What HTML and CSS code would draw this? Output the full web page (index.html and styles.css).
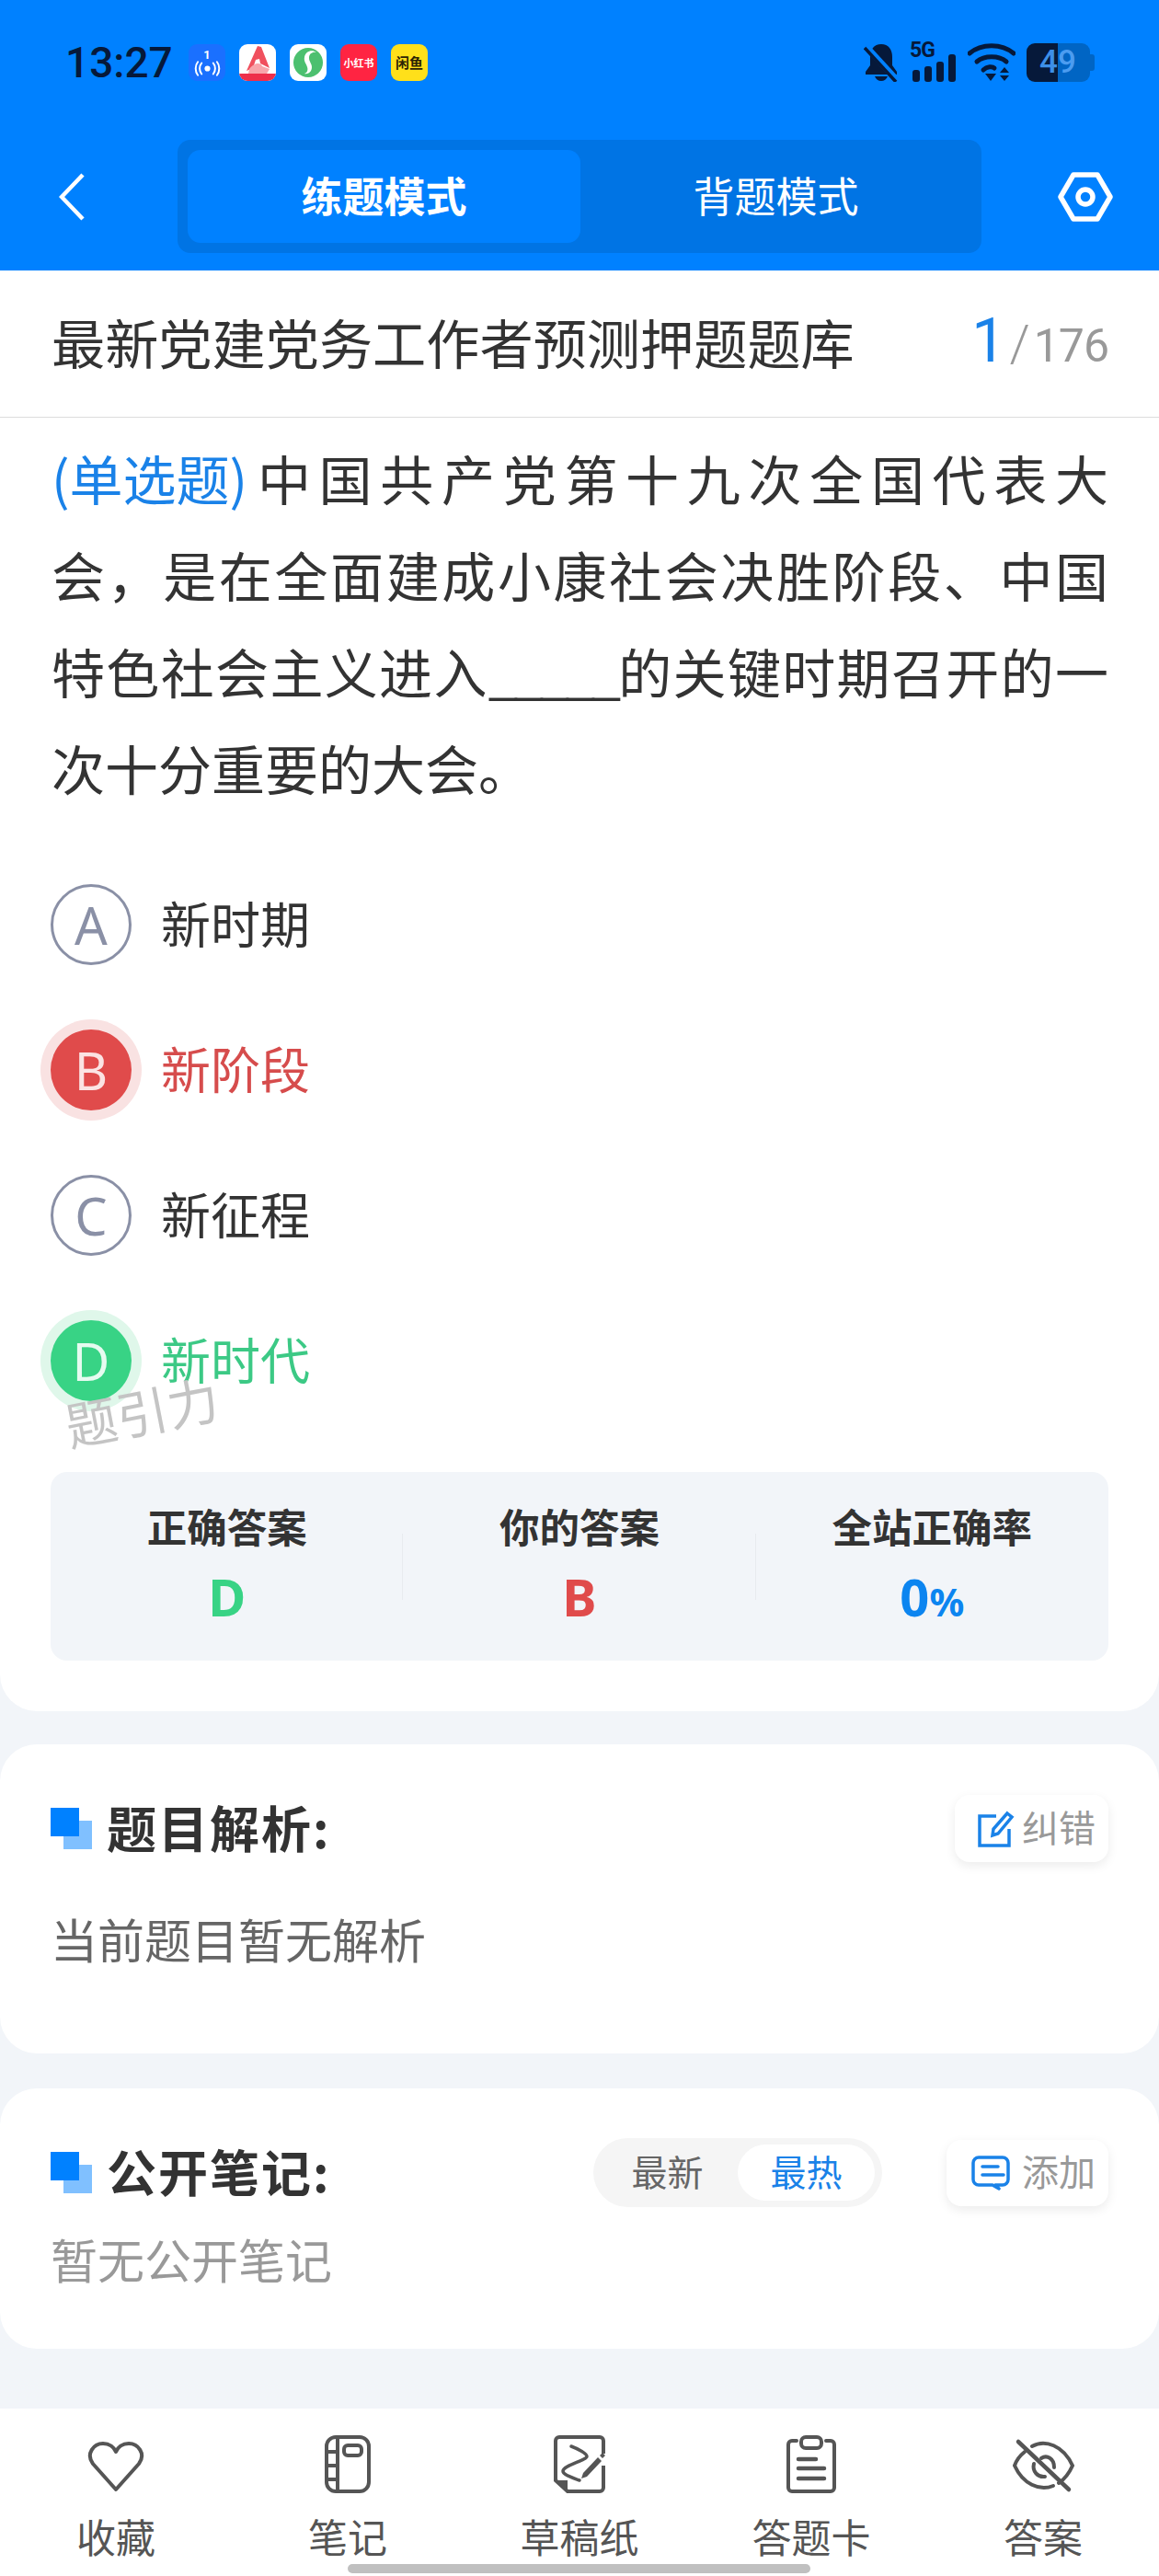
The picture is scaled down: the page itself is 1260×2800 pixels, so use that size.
FILE: index.html
```html
<!DOCTYPE html>
<html lang="zh-CN">
<head>
<meta charset="utf-8">
<title>练题模式</title>
<link rel="stylesheet" href="styles.css">
</head>
<body>
<div class="page">

  <!-- header: status bar + mode tabs -->
  <header class="header">
    <div class="status">
      <span class="time">13:27</span>
      <div class="apps">
        <span class="app app-hot">
          <span class="hot-num">1</span>
          <svg class="hot-wave" viewBox="0 0 32 18"><circle cx="16" cy="9" r="3.4" fill="#fff"/><path d="M9 2.5C6 6 6 12 9 15.5M23 2.5C26 6 26 12 23 15.5M4.5 1C1 5.500 1 12.500 4.500 17M27.500 1C31 5.500 31 12.500 27.500 17" fill="none" stroke="#fff" stroke-width="2.200" stroke-linecap="round"/></svg>
        </span>
        <span class="app app-white">
          <svg class="app-svg" viewBox="0 0 40 40"><path d="M20 2L8 29l7-3 3-9 4-1 1 5 10 5L24 3z" fill="#f0505e"/><path d="M11 27c6-8 13-7 14-3l8 3-3 5H10z" fill="#f8a5ab"/><path d="M0 32h40v2a6 6 0 0 1-6 6H6a6 6 0 0 1-6-6z" fill="#ee2f4b"/></svg>
        </span>
        <span class="app app-white">
          <svg class="app-svg" viewBox="0 0 40 40"><circle cx="20" cy="20" r="16" fill="#4cc06f"/><path d="M29 9c-4-1-8 1-8 6 0 4 3 6 3 10 0 5-4 8-8 7 3-1 4-4 3-7-1-4-4-6-3-11 1-6 8-9 13-5z" fill="#fff"/></svg>
        </span>
        <span class="app app-red"><span class="app-word">小红书</span></span>
        <span class="app app-yellow"><span class="app-word">闲鱼</span></span>
      </div>
      <div class="sys">
        <svg class="sys-bell" viewBox="0 0 38 42"><path d="M19 1c-8 0-12 6-12 14v9l-5 7v3h34v-3l-5-7v-9C31 7 27 1 19 1zM12 36c1 3 4 5 7 5s6-2 7-5z" fill="#06193a"/><path d="M3 4l33 36" stroke="#0081ff" stroke-width="7"/><path d="M1 5l34 37" stroke="#06193a" stroke-width="3.500"/></svg>
        <div class="sys-signal">
          <span class="sys-5g">5G</span>
          <svg class="sys-bars" viewBox="0 0 48 30"><g fill="#06193a"><rect x="1" y="17" width="8" height="13" rx="3"/><rect x="14" y="13" width="8" height="17" rx="3"/><rect x="27" y="8" width="8" height="22" rx="3"/><rect x="40" y="0" width="8" height="30" rx="3"/></g></svg>
        </div>
        <svg class="sys-wifi" viewBox="0 0 52 42"><g fill="none" stroke="#06193a" stroke-width="5" stroke-linecap="round"><path d="M2 11C15 0 37 0 50 11"/><path d="M10 20C18 13 34 13 42 20"/><path d="M17 29C21 25 27 25 29 27"/></g><path d="M19 33h12l-6 8zM40 26l5 6H35zM35 35h10l-5 6z" fill="#06193a"/></svg>
        <div class="battery"><span class="batt-fill"><span class="batt-num">4</span></span><span class="batt-rest"><span class="batt-num batt-num2">9</span></span><span class="batt-nub"></span></div>
      </div>
    </div>
    <div class="nav">
      <svg class="back" viewBox="0 0 28 52"><path d="M26 2L3 26l23 24" fill="none" stroke="#fff" stroke-width="4.500"/></svg>
      <div class="tabs">
        <div class="tab tab-on">练题模式</div>
        <div class="tab">背题模式</div>
      </div>
      <svg class="gear" viewBox="0 0 60 54"><path d="M17 3h26l14 24-14 24H17L3 27z" fill="none" stroke="#fff" stroke-width="5.500" stroke-linejoin="round"/><circle cx="30" cy="27" r="8" fill="none" stroke="#fff" stroke-width="5.500"/></svg>
    </div>
  </header>

  <!-- question card -->
  <section class="card card-q">
    <div class="title-row">
      <span class="title">最新党建党务工作者预测押题题库</span>
      <span class="count"><b>1</b><i>/</i>176</span>
    </div>
    <div class="question">
      <span class="qline"><span class="qtype">(单选题)</span>中国共产党第十九次全国代表大</span>
      <span class="qline">会，是在全面建成小康社会决胜阶段、中国</span>
      <span class="qline">特色社会主义进入<span class="blank">_____</span>的关键时期召开的一</span>
      <span class="qline qlast">次十分重要的大会。</span>
    </div>
    <div class="options">
      <div class="option"><span class="letter">A</span><span class="opt-text">新时期</span></div>
      <div class="option opt-wrong"><span class="letter">B</span><span class="opt-text">新阶段</span></div>
      <div class="option"><span class="letter">C</span><span class="opt-text">新征程</span></div>
      <div class="option opt-right"><span class="letter">D</span><span class="opt-text">新时代</span></div>
    </div>
    <div class="stats">
      <div class="stat"><div class="stat-label">正确答案</div><div class="stat-val green">D</div></div>
      <div class="stat"><div class="stat-label">你的答案</div><div class="stat-val red">B</div></div>
      <div class="stat"><div class="stat-label">全站正确率</div><div class="stat-val blue">0<small>%</small></div></div>
    </div>
    <div class="watermark">题引力</div>
  </section>

  <!-- explanation -->
  <section class="card card-a">
    <div class="sec-head">
      <span class="sec-mark"></span>
      <span class="sec-title">题目解析:</span>
      <div class="pill-btn">
        <svg class="pill-icon" viewBox="0 0 40 40"><path d="M20 6H2v32h32V20" fill="none" stroke="#1a82e8" stroke-width="3.500"/><path d="M32 3l5 4-15 18-6 2 1-7z" fill="none" stroke="#1a82e8" stroke-width="3.500"/></svg>
        <span class="pill-text">纠错</span>
      </div>
    </div>
    <p class="sec-text">当前题目暂无解析</p>
  </section>

  <!-- notes -->
  <section class="card card-n">
    <div class="sec-head">
      <span class="sec-mark"></span>
      <span class="sec-title">公开笔记:</span>
      <div class="sort">
        <span class="sort-item">最新</span>
        <span class="sort-item sort-on">最热</span>
      </div>
      <div class="pill-btn pill-add">
        <svg class="pill-icon" viewBox="0 0 42 38"><path d="M8 2h26a6 6 0 0 1 6 6v18a6 6 0 0 1-6 6h-8l4 4-7-4H8a6 6 0 0 1-6-6V8a6 6 0 0 1 6-6z" fill="none" stroke="#1a82e8" stroke-width="3.500" stroke-linejoin="round"/><path d="M12 12h17M12 21h23" stroke="#1a82e8" stroke-width="3.500" stroke-linecap="round"/></svg>
        <span class="pill-text">添加</span>
      </div>
    </div>
    <p class="sec-text sec-empty">暂无公开笔记</p>
  </section>

  <!-- bottom bar -->
  <nav class="bar">
    <div class="bar-item">
      <svg class="bar-icon" width="64" height="63" viewBox="0 -6 64 63"><path d="M32 53L7 25C-1 14 8 3 18 3c7 0 12 4 14 9 2-5 7-9 14-9 10 0 19 11 11 22z" fill="none" stroke="#555" stroke-width="4" stroke-linejoin="round"/></svg>
      <span>收藏</span>
    </div>
    <div class="bar-item">
      <svg class="bar-icon" width="50" height="63" viewBox="0 0 50 63"><g fill="none" stroke="#555" stroke-width="4"><rect x="2" y="2" width="46" height="59" rx="10"/><path d="M14 2v59M2 18h12M2 33h12M2 48h12"/><rect x="21" y="11" width="19" height="11" rx="4"/></g></svg>
      <span>笔记</span>
    </div>
    <div class="bar-item">
      <svg class="bar-icon" width="56" height="63" viewBox="0 0 56 63"><g fill="none" stroke="#555"><path d="M54 20V6a4 4 0 0 0-4-4H6a4 4 0 0 0-4 4v43l13 12h35a4 4 0 0 0 4-4V33" stroke-width="4"/><path d="M19 12c8 3 17 8 17 11 0 4-26 10-26 16 0 4 10 7 18 10" stroke-width="3.500" stroke-linecap="round"/></g><path d="M2 49h13v12z" fill="#555"/><path d="M32 41l16-17 4 4-16 17-6 2zM50 22l3-3 3 3-3 3z" fill="#555"/></svg>
      <span>草稿纸</span>
    </div>
    <div class="bar-item">
      <svg class="bar-icon" width="54" height="63" viewBox="0 0 54 63"><g fill="none" stroke="#555" stroke-width="4"><path d="M11 6H6a4 4 0 0 0-4 4v47a4 4 0 0 0 4 4h42a4 4 0 0 0 4-4V10a4 4 0 0 0-4-4h-5" stroke-linecap="round"/><rect x="16" y="2" width="22" height="12" rx="5"/><path d="M13 26h19M13 36h28M13 47h28" stroke-width="4.500" stroke-linecap="round"/></g></svg>
      <span>答题卡</span>
    </div>
    <div class="bar-item">
      <svg class="bar-icon" width="68" height="63" viewBox="0 -5 68 63"><g fill="none" stroke="#555" stroke-width="4" stroke-linecap="round"><path d="M22 7C36-1 56 6 66 28c-4 9-9 15-15 19"/><path d="M14 13C9 17 5 22 3 28c9 20 27 28 42 22"/><path d="M32 20c6-4 14 0 14 10"/><path d="M24 26c-2 8 4 15 12 14"/><path d="M7 2l55 52" stroke-width="4.500"/></g></svg>
      <span>答案</span>
    </div>
  </nav>

  <div class="home-ind"></div>
</div>
</body>
</html>
```

FILE: styles.css
```css
* { box-sizing: border-box; margin: 0; padding: 0; }
body { width: 1260px; height: 2800px; overflow: hidden; background: #f2f5f9; font-family: "Noto Sans CJK SC", "Noto Sans", sans-serif; color: #333; }
.page { position: relative; display: flex; flex-direction: column; width: 1260px; height: 2800px; }

/* header */
.header { height: 294px; padding-top: 48px; background: #0081ff; flex: none; }
.status { display: flex; align-items: center; height: 40px; padding: 0 70px 0 71px; }
.time { width: 134px; font-family: Roboto, sans-serif; font-size: 46px; font-weight: 500; color: #06193a; line-height: 40px; }
.apps { display: flex; gap: 15px; }
.app { position: relative; display: flex; flex-direction: column; align-items: center; justify-content: center; width: 40px; height: 40px; border-radius: 9px; overflow: hidden; }
.app-hot { background: #1a70ff; }
.hot-num { font-family: Roboto, sans-serif; font-size: 13px; font-weight: 700; line-height: 13px; color: #fff; }
.hot-wave { width: 29px; height: 17px; }
.app-white { background: #fff; }
.app-svg { width: 40px; height: 40px; display: block; }
.app-red { background: #ff2442; color: #fff; }
.app-yellow { background: #ffe01a; color: #2b2205; }
.app-word { font-size: 11px; font-weight: 700; line-height: 14px; white-space: nowrap; }
.app-yellow .app-word { font-size: 15px; }
.sys { display: flex; align-items: center; margin-left: auto; height: 42px; }
.sys-bell { width: 38px; height: 42px; }
.sys-signal { position: relative; width: 48px; height: 42px; margin-left: 14px; }
.sys-5g { position: absolute; left: -2px; top: -1px; font-family: Roboto, sans-serif; font-size: 23px; font-weight: 700; line-height: 18px; letter-spacing: -1px; color: #06193a; }
.sys-bars { position: absolute; left: 0; top: 12px; width: 48px; height: 30px; }
.sys-wifi { width: 52px; height: 42px; margin-left: 13px; }
.battery { display: flex; align-items: center; height: 42px; margin-left: 12px; }
.batt-fill { width: 34px; height: 42px; background: #06193a; border-radius: 9px 0 0 9px; text-align: right; }
.batt-rest { width: 35px; height: 42px; background: #0065c4; border-radius: 0 9px 9px 0; text-align: left; }
.batt-nub { width: 5px; height: 18px; background: #0065c4; border-radius: 0 3px 3px 0; }
.batt-num { font-family: Roboto, sans-serif; font-size: 35px; font-weight: 500; line-height: 42px; color: #3d8fe8; }
.batt-num2 { color: #4b9cf0; }

.nav { display: flex; align-items: center; margin-top: 64px; padding-left: 64px; }
.back { width: 28px; height: 52px; flex: none; }
.tabs { display: flex; width: 874px; height: 123px; margin-left: 101px; padding: 11px; background: #0074e4; border-radius: 14px; flex: none; }
.tab { flex: 1; display: flex; align-items: center; justify-content: center; padding-bottom: 4px; border-radius: 14px; font-size: 45px; color: #fff; }
.tab-on { flex: none; width: 427px; background: #0081ff; font-weight: 700; }
.gear { width: 60px; height: 54px; margin-left: 83px; flex: none; }

/* cards */
.card { position: relative; background: #fff; border-radius: 40px; flex: none; }
.card-q { height: 1566px; border-radius: 0 0 40px 40px; }
.card-a { height: 336px; margin-top: 36px; padding: 55px 55px 0; }
.card-n { height: 283px; margin-top: 38px; padding: 54px 55px 0; }

.title-row { display: flex; align-items: center; justify-content: space-between; height: 160px; padding: 0 55px 6px 56px; border-bottom: 1px solid #dcdcdc; }
.title { font-size: 58.2px; color: #333; white-space: nowrap; }
.count { font-family: Roboto, sans-serif; font-size: 50px; font-weight: 400; letter-spacing: -1px; color: #999; white-space: nowrap; }
.count b { font-size: 66px; font-weight: 400; color: #1a82e8; }
.count i { font-style: normal; font-size: 56px; font-weight: 300; margin: 0 5px; }

.question { padding: 13px 55px 0 56px; font-size: 58px; line-height: 105px; color: #333; }
.qline { display: block; height: 105px; text-align: justify; text-align-last: justify; white-space: nowrap; }
.qlast { text-align-last: left; }
.qtype { display: inline-block; margin-right: 2px; color: #1a82e8; text-align-last: left; }
.blank { display: inline-block; letter-spacing: -4.4px; text-align-last: left; }

.options { display: flex; flex-direction: column; gap: 70px; margin-top: 74px; padding-left: 55px; }
.option { display: flex; align-items: center; height: 88px; font-size: 54px; color: #333; }
.opt-text { padding-bottom: 5px; }
.letter { display: flex; align-items: center; justify-content: center; width: 88px; height: 88px; margin-right: 32px; border: 3px solid #8a90a6; border-radius: 50%; font-family: "Noto Sans", sans-serif; font-size: 56px; font-weight: 400; color: #8a90a6; }
.opt-wrong { color: #d64c4c; }
.opt-wrong .letter { background: #e04b4b; border: 0; color: #fbe3e3; box-shadow: 0 0 0 11px #f9e2e2; }
.opt-right { color: #3cc985; }
.opt-right .letter { background: #38d385; border: 0; color: #e6fbf0; box-shadow: 0 0 0 11px #dff7ea; }

.stats { display: grid; grid-template-columns: repeat(3, 1fr); width: 1150px; height: 205px; margin: 77px 0 0 55px; background: #f2f5f9; border-radius: 18px; }
.stat { position: relative; padding-top: 33px; text-align: center; }
.stat + .stat::before { content: ""; position: absolute; left: -1px; top: 67px; width: 1px; height: 72px; background: #e8ebef; }
.stat-label { font-size: 43.5px; font-weight: 700; line-height: 52px; color: #333; }
.stat-val { margin-top: 15px; font-family: "Noto Sans", sans-serif; font-size: 56px; font-weight: 700; line-height: 70px; }
.stat-val small { font-size: 42px; }
.green { color: #38d385; }
.red { color: #e04b4b; }
.blue { color: #0c85f0; }

.watermark { position: absolute; left: 70px; top: 1207px; font-size: 56px; line-height: 64px; color: #c4c4c4; transform: rotate(-11deg); white-space: nowrap; }

.sec-head { display: flex; align-items: center; height: 73px; }
.card-n .sec-head { height: 75px; }
.sec-mark { position: relative; width: 45px; height: 45px; margin-right: 16px; flex: none; }
.sec-mark::before { content: ""; position: absolute; right: 0; bottom: 0; width: 31px; height: 31px; background: #80c0ff; }
.sec-mark::after { content: ""; position: absolute; left: 0; top: 0; width: 31px; height: 31px; background: #0081ff; }
.sec-title { padding-bottom: 5px; font-size: 54px; font-weight: 700; color: #333; white-space: nowrap; letter-spacing: 2px; }
.pill-btn { display: flex; align-items: center; width: 167px; height: 73px; margin-left: auto; padding-left: 25px; background: #fff; border-radius: 16px; box-shadow: 0 4px 12px rgba(0, 0, 0, .08); font-size: 40px; color: #999; white-space: nowrap; }
.pill-text { padding-bottom: 5px; }
.pill-icon { width: 40px; height: 40px; margin-right: 8px; flex: none; }
.pill-add { width: 176px; height: 72px; margin-left: 70px; padding-left: 27px; }
.pill-add .pill-icon { width: 42px; height: 38px; margin-right: 13px; }
.sec-text { margin-top: 53px; font-size: 51px; line-height: 60px; color: #666; }
.sec-empty { margin-top: 26px; color: #999; }

.sort { display: flex; width: 314px; height: 75px; margin-left: auto; padding: 7px 8px 7px 4px; background: #f5f5f5; border-radius: 38px; font-size: 39px; color: #666; }
.sort-item { display: flex; align-items: center; justify-content: center; flex: 1; padding-bottom: 5px; border-radius: 31px; }
.sort-on { flex: none; width: 149px; background: #fff; color: #1a82e8; }

/* bottom bar */
.bar { display: grid; grid-template-columns: repeat(5, 1fr); height: 182px; margin-top: auto; background: #fff; }
.bar-item { display: flex; flex-direction: column; align-items: center; font-size: 43px; line-height: 50px; color: #555; }
.bar-icon { display: block; height: 63px; margin-top: 29px; margin-bottom: 21px; }
.home-ind { position: absolute; left: 378px; top: 2787px; width: 503px; height: 10px; background: #c0c0c0; border-radius: 5px; }
```
